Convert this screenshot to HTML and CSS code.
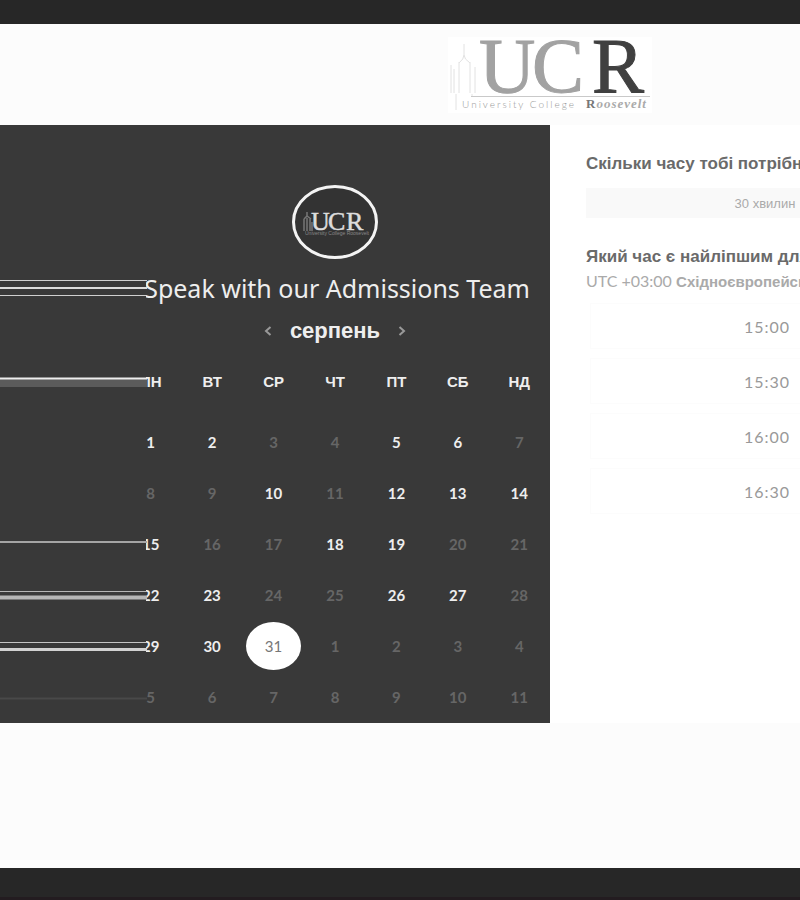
FILE: index.html
```html
<!DOCTYPE html>
<html lang="uk">
<head>
<meta charset="utf-8">
<meta name="viewport" content="width=device-width, initial-scale=1">
<title>Speak with our Admissions Team</title>
<link rel="stylesheet" href="styles.css">
</head>
<body>
<div class="bar bar-top"></div>
<header class="header">
  <svg class="logo" viewBox="0 0 204 76" role="img" aria-label="University College Roosevelt">
    <rect width="204" height="76" fill="#fff"/>
    <g fill="none" stroke="#e2e2e2" stroke-width="1">
      <path d="M16 7v11M11 26q5-4 5-8 0 4 6 8M11 25v31M22 25v31M3 28v28M6 32v24M27 30v26M8 57v16M24 57v3"/>
    </g>
    <path d="M23 59.500H202" stroke="#c9c9c9"/>
    <g class="logo-big">
      <text x="31" y="55" fill="#a2a2a2" stroke="#a2a2a2">U</text>
      <text x="84" y="55" fill="#a2a2a2" stroke="#a2a2a2">C</text>
      <text x="144" y="55" fill="#404040" stroke="#404040">R</text>
    </g>
    <text class="logo-small" x="14" y="71">University College</text>
    <text class="logo-name" x="138" y="71"><tspan class="logo-initial">R</tspan>oosevelt</text>
  </svg>
</header>
<main class="booking">
  <section class="calendar">
    <svg class="badge" viewBox="0 0 86 74" role="img" aria-label="UCR">
      <ellipse cx="43" cy="37" rx="41.500" ry="35.500" fill="#333" stroke="#f4f4f4" stroke-width="3"/>
      <path d="M15 27v5M12 34l3-3 4 3M12 34v12M15 33v13M18 34v12M20 37v9" stroke="#777" stroke-width="1.500" fill="none"/>
      <g class="badge-big"><text x="19" y="45">U</text><text x="36" y="45">C</text><text x="54" y="45">R</text></g>
      <text class="badge-small" x="13" y="50">University College Roosevelt</text>
    </svg>
    <h1 class="title">Speak with our Admissions Team</h1>
    <div class="month">
      <button type="button" aria-label="Попередній місяць"><svg viewBox="0 0 8 10"><path d="M6.500 1L2 5l4.500 4"/></svg></button>
      <h2>серпень</h2>
      <button type="button" aria-label="Наступний місяць"><svg viewBox="0 0 8 10"><path d="M1.500 1L6 5 1.500 9"/></svg></button>
    </div>
    <table class="days">
      <thead><tr><th>ПН</th><th>ВТ</th><th>СР</th><th>ЧТ</th><th>ПТ</th><th>СБ</th><th>НД</th></tr></thead>
      <tbody>
        <tr><td class="open">1</td><td class="open">2</td><td>3</td><td>4</td><td class="open">5</td><td class="open">6</td><td>7</td></tr>
        <tr><td>8</td><td>9</td><td class="open">10</td><td>11</td><td class="open">12</td><td class="open">13</td><td class="open">14</td></tr>
        <tr><td class="open">15</td><td>16</td><td>17</td><td class="open">18</td><td class="open">19</td><td>20</td><td>21</td></tr>
        <tr><td class="open">22</td><td class="open">23</td><td>24</td><td>25</td><td class="open">26</td><td class="open">27</td><td>28</td></tr>
        <tr><td class="open">29</td><td class="open">30</td><td><span class="selected">31</span></td><td>1</td><td>2</td><td>3</td><td>4</td></tr>
        <tr><td>5</td><td>6</td><td>7</td><td>8</td><td>9</td><td>10</td><td>11</td></tr>
      </tbody>
    </table>
    <!-- Horizontal streaks running in from the left edge -->
    <svg class="streaks" viewBox="0 0 147 598" preserveAspectRatio="none" aria-hidden="true">
      <rect width="146" height="598" fill="#393939"/>
      <path d="M0 155.500H147M0 170.500H147" stroke="#d0d0d0"/>
      <path d="M0 163H147" stroke="#dcdcdc" stroke-width="2"/>
      <path d="M0 258H147" stroke="#5b5b5b" stroke-width="8"/>
      <path d="M0 253.500H147" stroke="#ededed" stroke-width="2"/>
      <path d="M0 417H147" stroke="#a5a5a5" stroke-width="2"/>
      <path d="M0 466.500H147" stroke="#b5b5b5"/>
      <path d="M0 472.500H147" stroke="#b5b5b5" stroke-width="4"/>
      <path d="M0 517.500H147" stroke="#c5c5c5"/>
      <path d="M0 524.500H147" stroke="#d2d2d2" stroke-width="3"/>
      <path d="M0 573.500H147" stroke="#494949" stroke-width="2"/>
    </svg>
  </section>
  <section class="times">
    <h2>Скільки часу тобі потрібно?</h2>
    <button type="button" class="duration">30 хвилин</button>
    <h2>Який час є найліпшим для тебе?</h2>
    <p class="zone"><span>UTC +03:00</span> Східноєвропейський час</p>
    <div class="slots">
      <button type="button">15:00</button>
      <button type="button">15:30</button>
      <button type="button">16:00</button>
      <button type="button">16:30</button>
    </div>
  </section>
</main>
<div class="bar bar-bottom"></div>
</body>
</html>
```
FILE: styles.css
```css
* { box-sizing: border-box; }

body {
  margin: 0;
  min-height: 100vh;
  display: flex;
  flex-direction: column;
  overflow-x: hidden;
  background: #fcfcfc;
  font-family: Lato, "Liberation Sans", sans-serif;
}

h1, h2, p { margin: 0; }

button {
  padding: 0;
  border: 0;
  background: none;
  font: inherit;
  color: inherit;
}

.bar { background: #272727; }
.bar-top { height: 24px; }
.bar-bottom { height: 32px; margin-top: auto; border-bottom: 3px solid #231c20; }

.header {
  display: flex;
  justify-content: center;
  padding: 13px 0 12px 300px;
}

.logo { width: 204px; height: 76px; overflow: visible; }
.logo-big { font: 78px "Liberation Serif", serif; }
.logo-small { font: 300 10px Lato, sans-serif; letter-spacing: 2px; fill: #999; }
.logo-name { font: italic bold 13px "Liberation Serif", serif; letter-spacing: 1px; fill: #aaa; }
.logo-initial { font-style: normal; fill: #777; }

.booking {
  display: flex;
  overflow: hidden;
  background: #fff;
}

.calendar {
  position: relative;
  flex: 0 0 68.75%;
  display: flex;
  flex-direction: column;
  padding: 60px 0 1px 120px;
  background: #393939;
  color: #eee;
}

.badge { width: 86px; height: 74px; align-self: center; }
.badge-big { font: 26px "Liberation Serif", serif; fill: #ddd; stroke: #ddd; stroke-width: 0.5; }
.badge-small { font: 5px "Liberation Sans", sans-serif; fill: #888; }

.title {
  padding-right: 20px;
  margin-top: 12px;
  font: 25px/34px "Noto Sans", sans-serif;
  text-align: right;
  white-space: nowrap;
}

.month {
  display: flex;
  justify-content: center;
  align-items: center;
  gap: 18px;
  margin-top: 10px;
  height: 32px;
}
.month h2 { font: bold 22px/32px "Liberation Sans", sans-serif; }
.month button { width: 8px; height: 10px; display: flex; }
.month path { fill: none; stroke: #999; stroke-width: 2; }

.days {
  width: 100%;
  table-layout: fixed;
  border-collapse: collapse;
  margin-top: 10px;
}
.days th {
  height: 59px;
  padding: 0 0 10px;
  font: bold 15px/18px "Liberation Sans", sans-serif;
}
.days td {
  height: 51px;
  padding: 0;
  text-align: center;
  font-size: 15px;
  line-height: 18px;
  font-weight: bold;
  color: #666;
}
.days .open { color: #eee; }

.selected {
  display: inline-flex;
  align-items: center;
  justify-content: center;
  width: 55px;
  height: 48px;
  border-radius: 50%;
  background: #fff;
  color: #777;
  font-weight: 400;
  vertical-align: middle;
}

.streaks {
  position: absolute;
  left: 0;
  top: 0;
  width: 147px;
  height: 100%;
}

.times {
  flex: 0 0 394px;
  padding: 28px 0 0 36px;
  color: #999;
}
.times h2 {
  font: bold 17px/22px "Liberation Sans", sans-serif;
  color: #6a6a6a;
  white-space: nowrap;
}
.duration {
  display: block;
  width: 100%;
  height: 30px;
  margin: 13px 0 28px;
  background: #f9f9f9;
  font: 13px "Liberation Sans", sans-serif;
  color: #aaa;
}
.zone {
  font: bold 15px/26px "Liberation Sans", sans-serif;
  color: #aaa;
  white-space: nowrap;
}
.zone span { font: 16px/26px Lato, sans-serif; }
.slots {
  display: grid;
  gap: 9px;
  margin: 8px 0 0 4px;
}
.slots button {
  height: 46px;
  border: 1px solid #fcfcfc;
  font-size: 16px;
  letter-spacing: 1px;
}
```
